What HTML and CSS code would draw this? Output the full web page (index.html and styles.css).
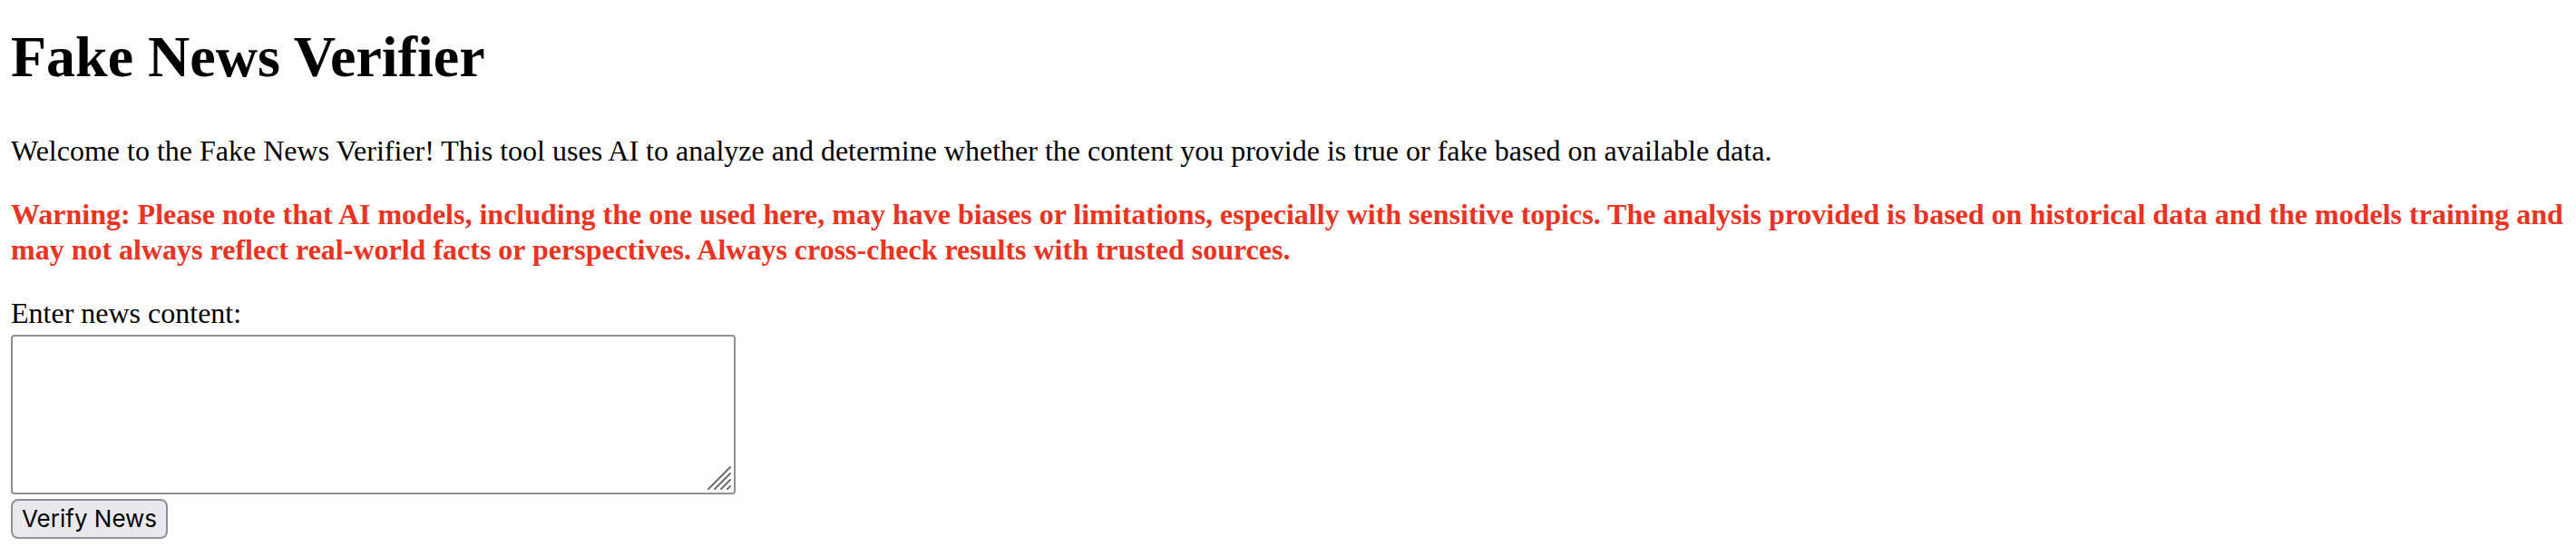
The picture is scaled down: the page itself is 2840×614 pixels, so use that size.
FILE: index.html
```html
<!DOCTYPE html>
<html lang="en">
<head>
<meta charset="utf-8">
<title>Fake News Verifier</title>
<link rel="stylesheet" href="styles.css">
</head>
<body>
<h1 class="title">Fake News Verifier</h1>
<p class="intro">Welcome to the Fake News Verifier! This tool uses AI to analyze and determine whether the content you provide is true or fake based on available data.</p>
<p class="warning">Warning: Please note that AI models, including the one used here, may have biases or limitations, especially with sensitive topics. The analysis provided is based on historical data and the models training and may not always reflect real-world facts or perspectives. Always cross-check results with trusted sources.</p>
<form class="form">
<label class="label" for="news">Enter news content:</label>
<div class="field">
<textarea class="news" id="news" name="news"></textarea>
<svg class="grip" viewBox="0 0 26 26" aria-hidden="true"><path d="M1 25L25 1M8 25L25 8M15 25L25 15M22 25L25 22"/></svg>
</div>
<button class="verify" type="button">Verify News</button>
</form>
</body>
</html>
```

FILE: styles.css
```css
body {
  margin: 0;
  padding: 25px 8px 20px 12px;
  background: #fff;
  color: #000;
  font: 32px/39px "Liberation Serif", "Times New Roman", serif;
}
.title {
  margin: 0 0 46px;
  font-size: 64px;
  line-height: 76px;
}
.intro {
  margin: 0 0 31px;
}
.warning {
  margin: 0 0 31px;
  color: #eb3323;
  font-weight: bold;
}
.form {
  display: flex;
  flex-direction: column;
  align-items: flex-start;
}
.field {
  position: relative;
  display: flex;
  max-width: 100%;
  margin: 4px 0 5px;
}
.news {
  box-sizing: border-box;
  width: 799px;
  max-width: 100%;
  height: 176px;
  margin: 0;
  padding: 4px;
  border: 2px solid #8f8f9d;
  border-radius: 4px;
  font: 26px "Liberation Mono", monospace;
  resize: none;
}
.grip {
  position: absolute;
  right: 5px;
  bottom: 5px;
  width: 26px;
  height: 26px;
  fill: none;
  stroke: #6e6e6e;
  stroke-width: 2;
  stroke-linecap: round;
}
.verify {
  padding: 2px 10px;
  border: 2px solid #8f8f9d;
  border-radius: 8px;
  background: #e9e9ed;
  color: #000;
  font: 26px/36px Inter, "Liberation Sans", sans-serif;
}
```
